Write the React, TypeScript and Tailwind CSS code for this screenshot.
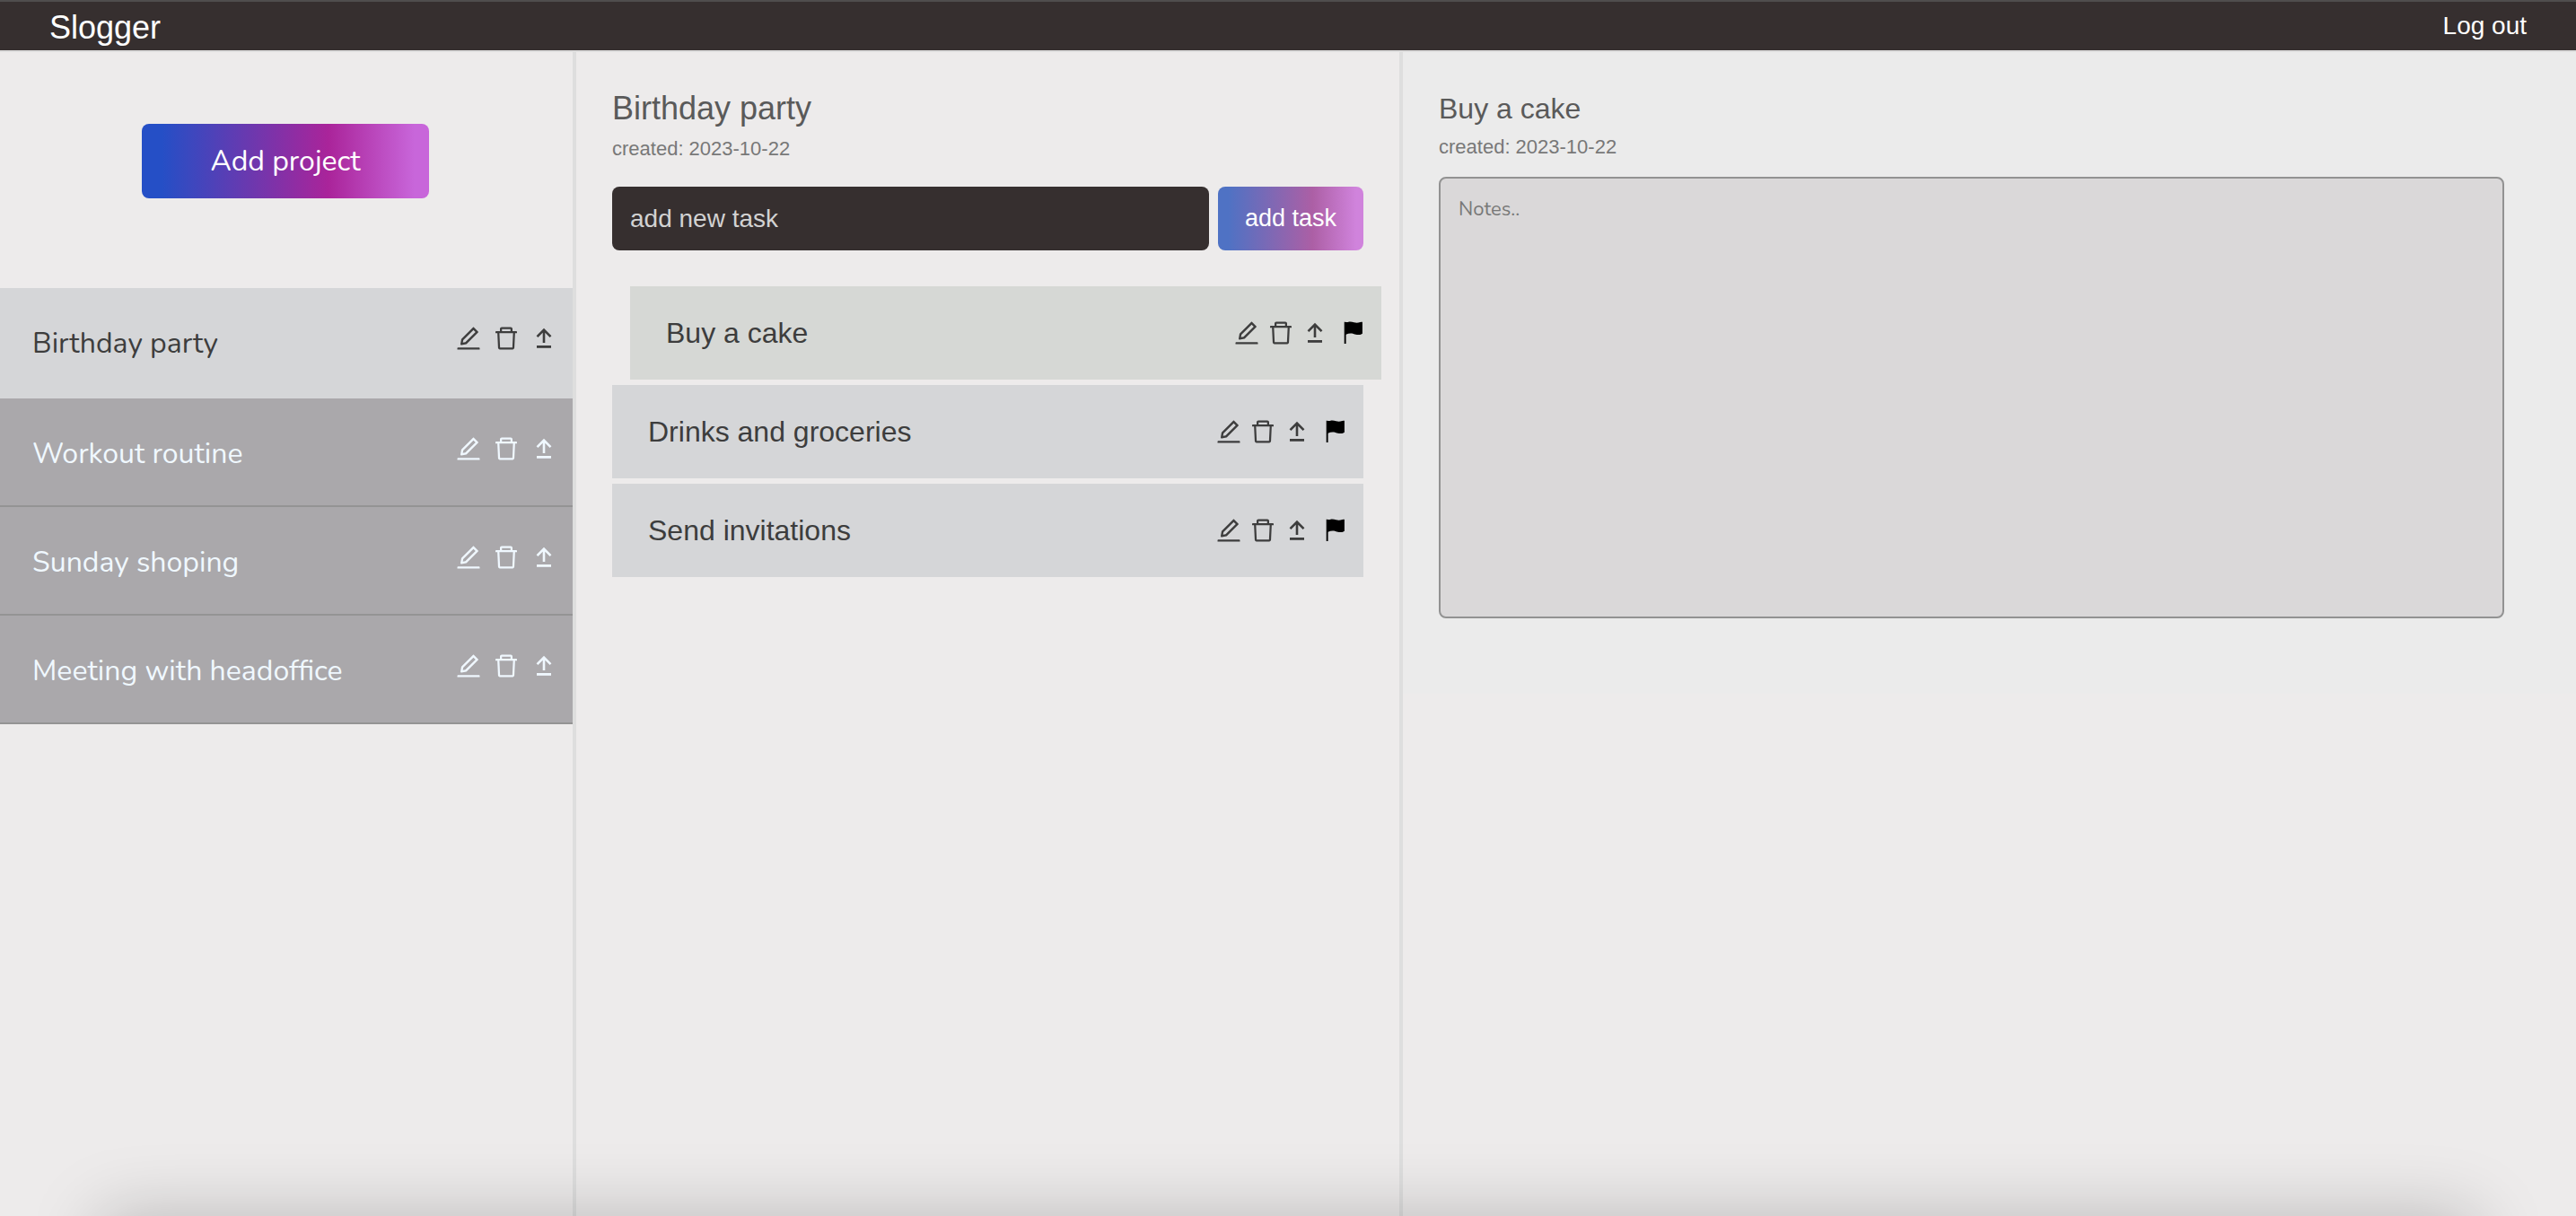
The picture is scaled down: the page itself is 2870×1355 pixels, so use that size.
import { useState } from "react";
import { AiOutlineDelete, AiOutlineEdit } from "react-icons/ai";

const projects = ["Birthday party", "Workout routine", "Sunday shoping", "Meeting with headoffice"];
const tasks = ["Buy a cake", "Drinks and groceries", "Send invitations"];

function UploadIcon() {
  return (
    <svg viewBox="0 0 32 32" className="size-8" fill="none" stroke="currentColor" aria-hidden="true">
      <path d="M16 21V7M8.500 14.200 16 6.700l7.500 7.500" strokeWidth="2.6" />
      <path d="M8 25.400h16" strokeWidth="2.800" />
    </svg>
  );
}

function FlagIcon() {
  return (
    <svg viewBox="0 0 32 32" className="size-8" fill="black" aria-hidden="true">
      <path d="M6.700 3.800h.9c1 .3 2 .5 3.200 .1 2.200-.5 4.600-.3 6.800 .4 2.300 .7 4.500 .5 6.800-.2l1.600-.4c.5-.1 .9 0 .9 .4V16.800c-1.200 .8-2.400 1.200-4 1.300-2.200 .1-4-.5-6-1.100-2.800-.7-5.500-.5-8.300 .7V28H6.700z" />
    </svg>
  );
}

function ItemActions({ name }: { name: string }) {
  return (
    <>
      <button aria-label={`Edit ${name}`}>
        <AiOutlineEdit className="size-8" />
      </button>
      <button aria-label={`Delete ${name}`}>
        <AiOutlineDelete className="size-8" />
      </button>
      <button aria-label={`Move ${name} up`}>
        <UploadIcon />
      </button>
    </>
  );
}

function Header() {
  return (
    <header className="flex h-[58px] items-center justify-between border-t-2 border-b-2 border-t-[#4f4d4d] border-b-[#dddddd] bg-[#362f2f] px-[55px] text-white">
      <a href="#" className="pt-1 text-[36px] leading-[48px]">
        Slogger
      </a>
      <button className="text-[28px] leading-[48px]">Log out</button>
    </header>
  );
}

function Sidebar({ active, onSelect }: { active: string; onSelect: (name: string) => void }) {
  return (
    <aside className="border-r-4 border-[#dedede] font-['Nunito','Noto_Sans',sans-serif]">
      <div className="flex justify-center pt-20 pr-0.5 pb-[100px]">
        <button className="h-[83px] w-80 rounded-lg bg-[linear-gradient(90deg,#254fc6_7%,#aa249a_65%,#c866da_95%)] text-[32px] text-white">
          Add project
        </button>
      </div>
      <ul>
        {projects.map((name) => (
          <li
            key={name}
            className={
              name === active
                ? "flex h-[123px] items-start justify-between bg-[#d5d6d8] pr-4 pl-9 text-[#3d3d3d]"
                : "flex h-[121px] items-start justify-between border-b-2 border-[#949494] bg-[#aaa8ab] pr-4 pl-9 text-[#f0f8ff]"
            }
          >
            <button className="pt-10 text-[32px] leading-[44px]" onClick={() => onSelect(name)}>
              {name}
            </button>
            <div className="flex gap-[10px] pt-10">
              <ItemActions name={name} />
            </div>
          </li>
        ))}
      </ul>
    </aside>
  );
}

function TaskList({ project }: { project: string }) {
  return (
    <main className="border-r-4 border-[#dedede] px-10 pt-10">
      <h1 className="text-[36px] leading-[46px] text-[#5a5a5a]">{project}</h1>
      <p className="pt-2 text-[22px] leading-[28px] text-[#787878]">created: 2023-10-22</p>
      <form className="flex gap-[10px] pt-7" onSubmit={(e) => e.preventDefault()}>
        <input
          aria-label="add new task"
          placeholder="add new task"
          className="h-[71px] min-w-0 flex-1 rounded-lg bg-[#362f2f] px-5 text-[28px] text-white placeholder:text-[#d2d2d2]"
        />
        <button className="h-[71px] rounded-lg bg-[linear-gradient(90deg,#4f72c4_7%,#ac5fa5_65%,#d083dc_95%)] px-[30px] text-[27px] text-white">
          add task
        </button>
      </form>
      <ul className="flex flex-col gap-[6px] pt-10">
        {tasks.map((name, i) => (
          <li
            key={name}
            className={
              i === 0
                ? "-mr-5 ml-5 flex h-[104px] items-center justify-between bg-[#d6d8d5] pr-4 pl-10 text-[#3d3d3d]"
                : "flex h-[104px] items-center justify-between bg-[#d5d6d8] pr-4 pl-10 text-[#3d3d3d]"
            }
          >
            <button className="text-[32px]">{name}</button>
            <div className="flex gap-[6px]">
              <ItemActions name={name} />
              <button className="pl-1" aria-label={`Flag ${name}`}>
                <FlagIcon />
              </button>
            </div>
          </li>
        ))}
      </ul>
    </main>
  );
}

function TaskDetails() {
  return (
    <section>
      <div className="bg-[#ebebeb] pt-10 pr-20 pb-[84px] pl-10">
        <h2 className="text-[32px] leading-[46px] text-[#5a5a5a]">Buy a cake</h2>
        <p className="pt-[6px] text-[22px] leading-[28px] text-[#787878]">created: 2023-10-22</p>
        <textarea
          aria-label="Notes"
          placeholder="Notes.."
          className="mt-[19px] block h-[492px] w-full resize-none rounded-lg border-2 border-[#929292] bg-[#dad8d9] px-5 py-[18px] font-['Nunito','Noto_Sans',sans-serif] text-[22px] leading-[32px] text-[#3d3d3d] placeholder:text-[#787878]"
        />
      </div>
    </section>
  );
}

export default function App() {
  const [active, setActive] = useState(projects[0]);
  return (
    <div className="relative flex min-h-screen flex-col overflow-hidden bg-[#edebeb] font-['Liberation_Sans',Arial,sans-serif]">
      <Header />
      <div className="grid flex-1 grid-cols-[minmax(0,642fr)_minmax(0,921fr)_minmax(0,1307fr)]">
        <Sidebar active={active} onSelect={setActive} />
        <TaskList project={active} />
        <TaskDetails />
      </div>
      <div className="pointer-events-none absolute inset-x-28 top-full h-40 shadow-[0_0_80px_rgba(0,0,0,0.22)]" />
    </div>
  );
}
